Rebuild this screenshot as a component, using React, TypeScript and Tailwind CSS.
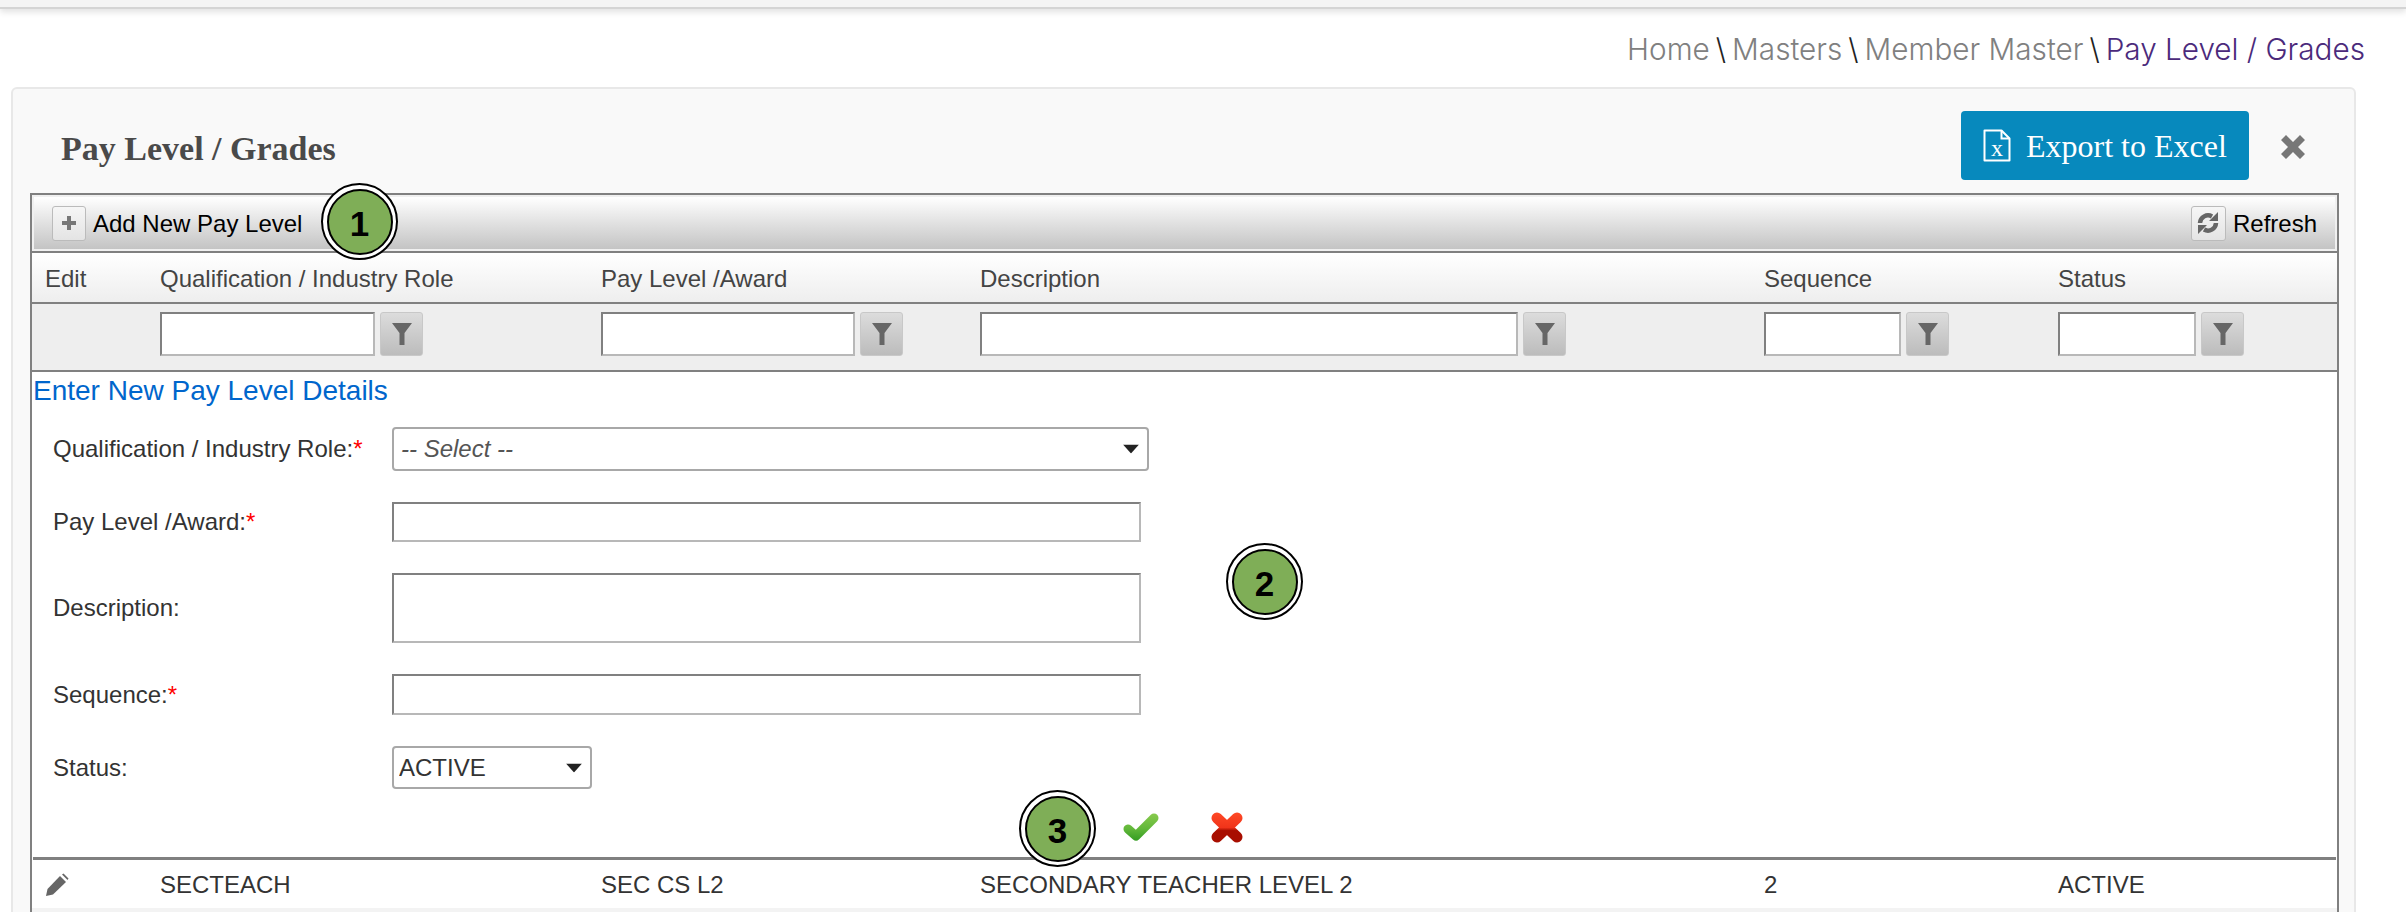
const inputClass =
  "block border-2 border-t-[#808080] border-l-[#808080] border-r-[#b8b8b8] border-b-[#b8b8b8] bg-white outline-none";

function FilterButton() {
  return (
    <button className="ml-[5px] flex h-[44px] w-[43px] items-center justify-center rounded-[3px] border border-[#c8c8c8] bg-gradient-to-b from-[#dcdcdc] to-[#bcbcbc]">
      <svg width="22" height="26" viewBox="0 0 22 26">
        <path d="M1 2h20l-7.5 10v12h-5V12z" fill="#666" />
      </svg>
    </button>
  );
}

function FilterCell({ width }: { width: string }) {
  return (
    <div className="flex items-start">
      <input className={`${inputClass} h-[44px] ${width}`} />
      <FilterButton />
    </div>
  );
}

function Badge({ n, className }: { n: number; className: string }) {
  return (
    <div
      className={`absolute flex h-[77px] w-[77px] items-center justify-center rounded-full border-[2px] border-black bg-white ${className}`}
    >
      <div className="flex h-[66px] w-[66px] items-center justify-center rounded-full border-[2px] border-black bg-[#7fae57] pt-[3px] text-[35px] leading-none font-bold text-black">
        {n}
      </div>
    </div>
  );
}

function Required() {
  return <span className="text-[#ff0000]">*</span>;
}

function FormRow({ label, required, children, className }: { label: string; required?: boolean; children: React.ReactNode; className?: string }) {
  return (
    <div className={`flex items-center ${className ?? ""}`}>
      <label className="w-[339px] text-[24px] leading-none text-[#333]">
        {label}:{required && <Required />}
      </label>
      {children}
    </div>
  );
}

function Caret() {
  return (
    <svg className="pointer-events-none absolute top-1/2 right-[9px] -translate-y-1/2" width="18" height="9" viewBox="0 0 18 9">
      <path d="M1 0h16l-8 9z" fill="#222" />
    </svg>
  );
}

export default function App() {
  return (
    <div className="relative h-[912px] w-[2406px] overflow-hidden bg-white font-['Liberation_Sans',Arial,sans-serif]">
      <div className="h-[9px] border-b-2 border-[#d4d4d4] bg-[#f4f4f4] shadow-[0_3px_6px_rgba(0,0,0,0.12)]" />

      <div className="flex h-[78px] items-center justify-end pt-[3px] pr-[41px] font-['Inter',sans-serif] text-[29.7px] font-light text-[#808080]">
        <span>Home</span>
        <span className="mx-[6px] text-[#222]">\</span>
        <span>Masters</span>
        <span className="mx-[6px] text-[#222]">\</span>
        <span>Member Master</span>
        <span className="mx-[6px] text-[#222]">\</span>
        <span className="text-[#4b2a7b]">Pay Level / Grades</span>
      </div>

      <div className="ml-[11px] h-[900px] w-[2345px] rounded-t-md border-2 border-[#e8e8e8] bg-[#f9f9f9]">
        <div className="flex h-[104px] items-start pr-[49px] pl-[48px]">
          <h1 className="mt-[41px] flex-1 font-['Liberation_Serif',serif] text-[34px] leading-[38px] font-bold text-[#4a4a4a]">
            Pay Level / Grades
          </h1>
          <button className="mt-[22px] flex h-[69px] w-[288px] items-center rounded-[4px] bg-[#0789bd] pl-[22px] font-['Liberation_Serif',serif] text-[32px] text-white">
            <svg width="28" height="33" viewBox="0 0 28 33" className="mr-[15px]">
              <path d="M1.5 1.5h17l8 8v22h-25z" fill="none" stroke="#fff" strokeWidth="2" strokeLinejoin="round" />
              <path d="M18.5 1.5v8h8" fill="none" stroke="#fff" strokeWidth="2" />
              <text x="14" y="27" textAnchor="middle" fill="#fff" fontSize="24" fontFamily="Liberation Serif, serif">x</text>
            </svg>
            Export to Excel
          </button>
          <svg width="24" height="24" viewBox="0 0 24 24" className="mt-[46px] ml-[32px]">
            <path d="M0 5L5 0l7 7 7-7 5 5-7 7 7 7-5 5-7-7-7 7-5-5 7-7z" fill="#777" />
          </svg>
        </div>

        <div className="ml-[17px] h-[800px] w-[2309px] border-2 border-[#808080] bg-white">
          <div className="flex h-[56px] items-center justify-between border-2 border-[#f0f0f0] bg-gradient-to-b from-white to-[#c4c4c4] pr-[18px] pl-[18px] text-[24px] text-black">
            <div className="flex items-center">
              <span className="mr-[7px] flex h-[35px] w-[34px] items-center justify-center rounded-[3px] border border-[#bbb] bg-gradient-to-b from-[#f6f6f6] to-[#e4e4e4]">
                <svg width="18" height="18" viewBox="0 0 18 18">
                  <path d="M9 2v14M2 9h14" stroke="#777" strokeWidth="4" />
                </svg>
              </span>
              <span className="pt-[2px]">Add New Pay Level</span>
            </div>
            <div className="flex items-center">
              <span className="mr-[7px] flex h-[35px] w-[35px] items-center justify-center rounded-[3px] border border-[#bbb] bg-gradient-to-b from-[#f6f6f6] to-[#e4e4e4]">
                <svg width="24" height="24" viewBox="0 0 24 24" fill="none" stroke="#666" strokeWidth="4.5">
                  <path d="M4 12a8 8 0 0 1 12-6.5" />
                  <path d="M20 12a8 8 0 0 1-12 6.5" />
                  <path d="M13 10h9V1zM11 14H2v9z" fill="#666" stroke="none" />
                </svg>
              </span>
              <span className="pt-[2px]">Refresh</span>
            </div>
          </div>

          <div className="grid h-[53px] grid-cols-[128px_441px_379px_784px_294px_1fr] items-center border-t-2 border-b-2 border-[#808080] bg-gradient-to-b from-white to-[#eeeeee] pt-[2px] text-[24px] text-[#444]">
            <div className="pl-[13px]">Edit</div>
            <div>Qualification / Industry Role</div>
            <div>Pay Level /Award</div>
            <div>Description</div>
            <div>Sequence</div>
            <div>Status</div>
          </div>

          <div className="grid h-[68px] grid-cols-[128px_441px_379px_784px_294px_1fr] border-b-2 border-[#808080] bg-[#eeeeee] pt-[8px]">
            <div />
            <FilterCell width="w-[215px]" />
            <FilterCell width="w-[254px]" />
            <FilterCell width="w-[538px]" />
            <FilterCell width="w-[137px]" />
            <FilterCell width="w-[138px]" />
          </div>

          <div className="h-[485px] bg-white">
            <h2 className="pt-[3px] pl-px text-[28px] leading-[32px] text-[#0066cc]">Enter New Pay Level Details</h2>
            <div className="pl-[21px]">
              <FormRow label="Qualification / Industry Role" required className="mt-[20px]">
                <div className="relative h-[44px] w-[757px]">
                  <select className="h-full w-full appearance-none rounded-[4px] border-2 border-[#a8a8a8] bg-white pl-[7px] text-[24px] text-[#555] italic outline-none">
                    <option>-- Select --</option>
                  </select>
                  <Caret />
                </div>
              </FormRow>
              <FormRow label="Pay Level /Award" required className="mt-[31px]">
                <input className={`${inputClass} h-[40px] w-[749px]`} />
              </FormRow>
              <FormRow label="Description" className="mt-[31px]">
                <textarea className={`${inputClass} h-[70px] w-[749px] resize-none`} />
              </FormRow>
              <FormRow label="Sequence" required className="mt-[31px]">
                <input className={`${inputClass} h-[41px] w-[749px]`} />
              </FormRow>
              <FormRow label="Status" className="mt-[31px]">
                <div className="relative h-[43px] w-[200px]">
                  <select className="h-full w-full appearance-none rounded-[4px] border-2 border-[#a8a8a8] bg-white pl-[5px] text-[24px] text-[#333] outline-none">
                    <option>ACTIVE</option>
                  </select>
                  <Caret />
                </div>
              </FormRow>
            </div>
            <div className="mt-[23px] ml-[1091px] flex items-start">
              <svg width="36" height="30" viewBox="0 0 36 30">
                <defs>
                  <linearGradient id="okGrad" x1="0" y1="0" x2="0" y2="30" gradientUnits="userSpaceOnUse">
                    <stop offset="0" stopColor="#8ccc50" />
                    <stop offset="0.55" stopColor="#62b83a" />
                    <stop offset="1" stopColor="#2f9a1f" />
                  </linearGradient>
                </defs>
                <path d="M5 17l8 7L31 6" fill="none" stroke="url(#okGrad)" strokeWidth="9" strokeLinecap="round" strokeLinejoin="round" />
              </svg>
              <svg width="32" height="31" viewBox="0 0 32 31" className="ml-[52px]">
                <defs>
                  <linearGradient id="noGrad" x1="0" y1="0" x2="0" y2="31" gradientUnits="userSpaceOnUse">
                    <stop offset="0" stopColor="#ff4a26" />
                    <stop offset="0.5" stopColor="#f0341a" />
                    <stop offset="0.6" stopColor="#a80e00" />
                    <stop offset="1" stopColor="#a80e00" />
                  </linearGradient>
                </defs>
                <path d="M6 6l20 19M26 6L6 25" fill="none" stroke="url(#noGrad)" strokeWidth="11" strokeLinecap="round" />
              </svg>
            </div>
          </div>

          <div className="mx-px grid h-[51px] grid-cols-[127px_441px_379px_784px_294px_1fr] items-center border-t-[3px] border-[#808080] bg-white pt-[2px] text-[24px] text-[#333]">
            <div className="pl-[12px]">
              <svg width="24" height="24" viewBox="0 0 24 24">
                <path d="M1 23l1.5-7L15 3l6 6L8 21.5z" fill="#666" />
                <path d="M17 1.5l1.5-1 5 5-1 1.5z" fill="#666" />
              </svg>
            </div>
            <div>SECTEACH</div>
            <div>SEC CS L2</div>
            <div>SECONDARY TEACHER LEVEL 2</div>
            <div>2</div>
            <div>ACTIVE</div>
          </div>
          <div className="h-[20px] bg-[#f3f3f3]" />
        </div>
      </div>

      <Badge n={1} className="top-[183px] left-[321px]" />
      <Badge n={2} className="top-[543px] left-[1226px]" />
      <Badge n={3} className="top-[790px] left-[1019px]" />
    </div>
  );
}
